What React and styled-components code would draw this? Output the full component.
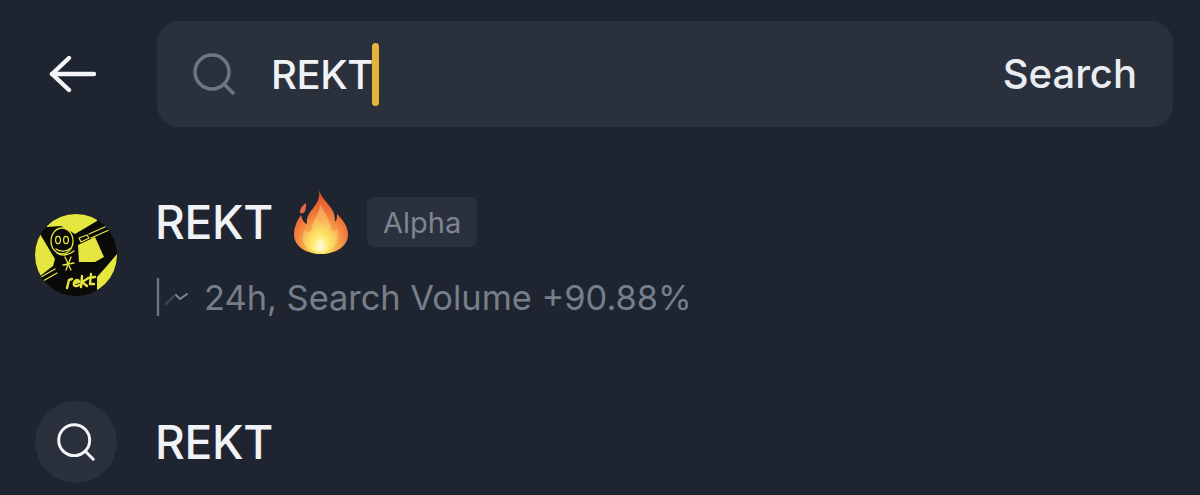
import styled, { createGlobalStyle } from "styled-components";

const GlobalStyle = createGlobalStyle`
  html, body {
    margin: 0;
    background: #1f2530;
    overflow: hidden;
  }
  * {
    box-sizing: border-box;
  }
`;

const SearchIcon = ({ size, color, width }) => (
    <svg width={size} height={size} viewBox="0 0 44 44" fill="none" stroke={color} strokeWidth={width} strokeLinecap="round">
        <circle cx="20" cy="20" r="17"/>
        <path d="M32.5 32.5L41 41"/>
    </svg>
)

const BackArrow = () => (
    <svg width="50" height="38" viewBox="0 0 50 38" fill="none" stroke="#f3f5f8" strokeWidth="4.4" strokeLinecap="round" strokeLinejoin="round">
        <path d="M3 19H45"/>
        <path d="M20 3L3 19L20 35"/>
    </svg>
)

const Flame = () => (
    <svg width="54" height="64" viewBox="0 0 54 64">
        <defs>
            <radialGradient id="flame" cx="50%" cy="86%" r="82%">
                <stop offset="0" stopColor="#fffbc4"/>
                <stop offset="0.16" stopColor="#fde65e"/>
                <stop offset="0.36" stopColor="#f8ab4c"/>
                <stop offset="0.62" stopColor="#f0773c"/>
                <stop offset="1" stopColor="#e0502e"/>
            </radialGradient>
            <radialGradient id="core" cx="50%" cy="88%" r="82%">
                <stop offset="0" stopColor="#fffde0"/>
                <stop offset="0.3" stopColor="#fde868"/>
                <stop offset="0.7" stopColor="#f9b258"/>
                <stop offset="1" stopColor="#f39a58"/>
            </radialGradient>
        </defs>
        <path fill="url(#flame)" d="M25 0C27 7 33 12 37 18C40 22 41 26 41 32C43 30 43 27 43 24C49 30 54 36 54 45C54 56 42 64 27 64C12 64 0 56 0 45C0 37 3 31 7 25C8 30 10 33 13 34C12 27 16 22 20 17C24 12 26 7 25 0Z"/>
        <path fill="url(#core)" d="M27 14C29 22 36 29 37 38C38 42 41 42 43 39C45 46 44 54 37 59C31 63 20 63 14 59C8 54 7 46 11 40C14 43 17 43 18 38C19 30 25 23 27 14Z"/>
        <path fill="#e8694a" d="M6 22C6 18 9 15 12 13C12 16 12 18 11 21C10 23 7 25 6 22Z"/>
    </svg>
)

const Avatar = () => (
    <svg width="82" height="82" viewBox="0 0 82 82">
        <defs>
            <clipPath id="coin">
                <circle cx="41" cy="41" r="41"/>
            </clipPath>
        </defs>
        <g clipPath="url(#coin)">
            <rect width="82" height="82" fill="#0a0a08"/>
            <g fill="#e6e640">
                <path d="M12 13L26 12L40 20L62 7L62 0L12 0Z"/>
                <path d="M43 31L60 23L69 43L60 48L44 48Z"/>
                <path d="M0 28L5 20L20 45L18 52L0 66Z"/>
                <path d="M62 76L82 72L82 40L71 53L62 63Z"/>
            </g>
            <g fill="none" stroke="#e6e640" strokeWidth="1.3" strokeLinecap="round" strokeLinejoin="round">
                <ellipse cx="27" cy="27" rx="11" ry="13"/>
                <ellipse cx="23" cy="26" rx="2.4" ry="3.6"/>
                <ellipse cx="31" cy="26" rx="2.4" ry="3.6"/>
                <path d="M21 35C25 38 31 38 36 34"/>
                <path d="M22 39C26 42 33 42 39 37"/>
                <path d="M30 43L36 56M36 43L31 56M28 51L39 49"/>
                <path d="M6 63L20 55M8 67L22 59"/>
                <path d="M44 24L52 21L54 24L46 28Z"/>
                <path d="M54 20L72 12M56 24L74 16"/>
            </g>
            <path fill="none" stroke="#e6e640" strokeWidth="2.4" strokeLinecap="round" strokeLinejoin="round"
                  d="M32 74L34 66L37 65M39 69L44 68C44 65 40 65 39 69C38 72 41 73 44 71M47 62L46 73M52 65L47 68L52 72M56 60L55 70L59 70M53 64L60 63"/>
        </g>
    </svg>
)

const TrendIcon = () => (
    <svg width="34" height="38" viewBox="0 0 34 38" fill="none" strokeLinecap="round" strokeLinejoin="round">
        <path d="M2 1V37" stroke="#6d7582" strokeWidth="2.4"/>
        <path d="M10 26L18 18" stroke="#454c58" strokeWidth="1.8"/>
        <path d="M20 17L24 21L31 16" stroke="#7d8592" strokeWidth="2"/>
    </svg>
)

const App = () => {
    return (
        <Wrapper>
            <GlobalStyle/>
            <Header>
                <BackButton>
                    <BackArrow/>
                </BackButton>
                <SearchBar>
                    <SearchIcon size={44} color="#6f7682" width={3.4}/>
                    <Query>
                        REKT
                        <Caret/>
                    </Query>
                    <SearchAction>Search</SearchAction>
                </SearchBar>
            </Header>

            <TokenRow>
                <Avatar/>
                <TokenInfo>
                    <TitleLine>
                        <Title>REKT</Title>
                        <Flame/>
                        <Badge>Alpha</Badge>
                    </TitleLine>
                    <Meta>
                        <TrendIcon/>
                        24h, Search Volume +90.88%
                    </Meta>
                </TokenInfo>
            </TokenRow>

            <SuggestionRow>
                <IconCircle>
                    <SearchIcon size={40} color="#f3f5f8" width={3.2}/>
                </IconCircle>
                <Title>REKT</Title>
            </SuggestionRow>
        </Wrapper>
    );
};

export default App;

const Wrapper = styled.main`
  width: 1200px;
  height: 495px;
  overflow: hidden;
  background: #1f2530;
  padding: 21px 27px 0 35px;
  font-family: Inter, "Noto Sans", sans-serif;
`;

const Header = styled.header`
  display: flex;
  align-items: center;
  height: 106px;
`;

const BackButton = styled.div`
  width: 122px;
  flex: none;
  display: flex;
  padding-left: 14px;
`;

const SearchBar = styled.div`
  flex: 1;
  height: 106px;
  display: flex;
  align-items: center;
  padding: 0 36px 0 35px;
  background: #2b313c;
  border-radius: 22px;
`;

const Query = styled.div`
  flex: 1;
  display: flex;
  align-items: center;
  margin-left: 35px;
  font-size: 40px;
  font-weight: 500;
  letter-spacing: -0.4px;
  color: #f0f2f6;
`;

const Caret = styled.span`
  width: 7px;
  height: 63px;
  margin-left: -1px;
  border-radius: 4px;
  background: #e5b53a;
`;

const SearchAction = styled.div`
  font-size: 40px;
  font-weight: 500;
  margin-bottom: 2px;
  color: #e9ecf1;
`;

const TokenRow = styled.section`
  display: flex;
  align-items: center;
  gap: 39px;
  margin-top: 58px;
  height: 140px;
`;

const TokenInfo = styled.div`
  display: flex;
  flex-direction: column;
  gap: 20px;
`;

const TitleLine = styled.div`
  display: flex;
  align-items: center;
  height: 64px;
  gap: 21px;
`;

const Title = styled.div`
  font-size: 46px;
  font-weight: 500;
  letter-spacing: -0.3px;
  margin-left: -1px;
  color: #f0f2f6;
`;

const Badge = styled.span`
  height: 50px;
  padding: 0 16px;
  margin-left: -2px;
  display: flex;
  align-items: center;
  border-radius: 8px;
  background: #2b313c;
  font-size: 29px;
  color: #7d8592;
`;

const Meta = styled.div`
  display: flex;
  align-items: center;
  gap: 14px;
  height: 46px;
  font-size: 34.4px;
  color: #767e8b;
`;

const SuggestionRow = styled.section`
  display: flex;
  align-items: center;
  gap: 39px;
  margin-top: 76px;
`;

const IconCircle = styled.div`
  width: 82px;
  height: 82px;
  border-radius: 50%;
  background: #2b313c;
  display: flex;
  align-items: center;
  justify-content: center;
`;
